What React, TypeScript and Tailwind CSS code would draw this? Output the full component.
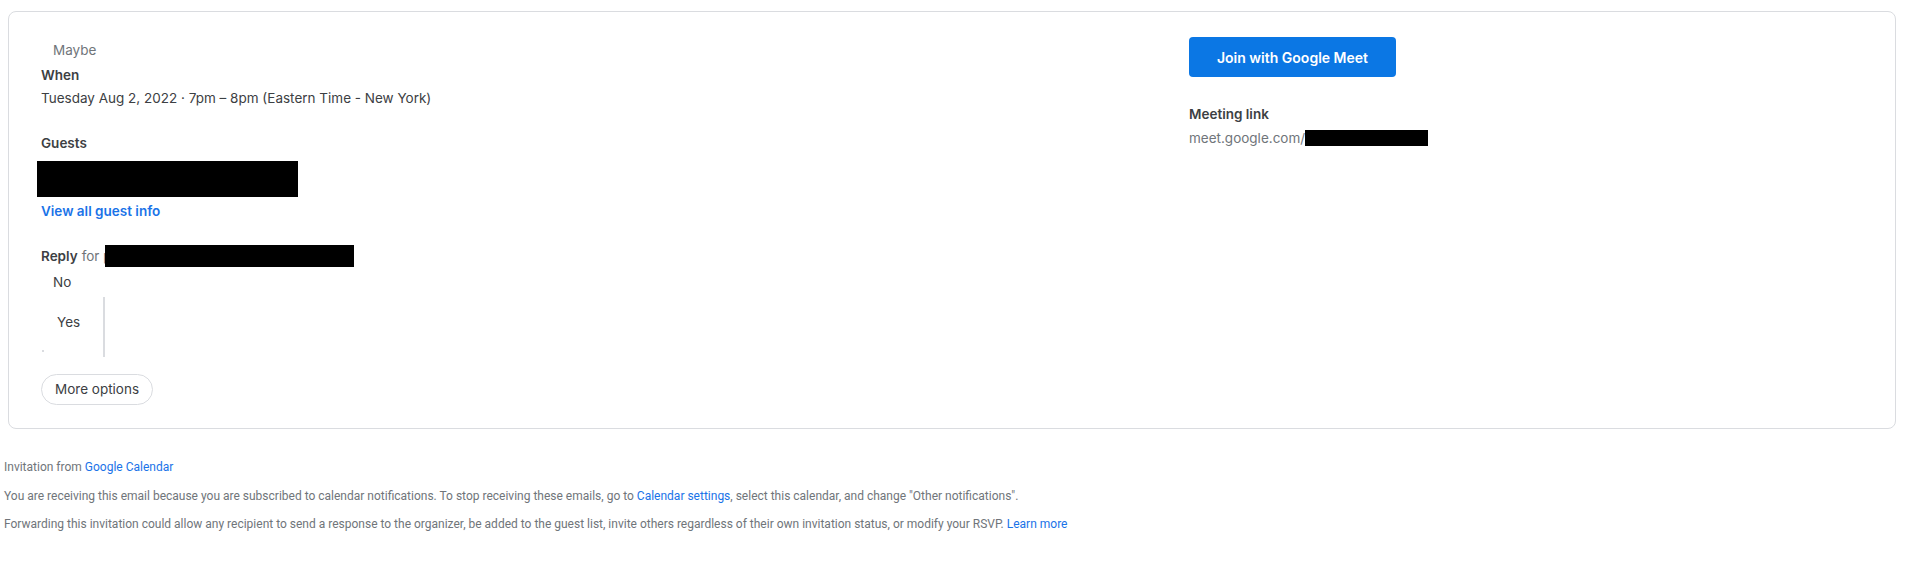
import React from "react";

const Redacted = ({ className }: { className: string }) => (
  <span className={`inline-block bg-black align-middle ${className}`} />
);

const Label = ({ children }: { children: React.ReactNode }) => (
  <div className="text-[13.5px] leading-5 font-semibold text-[#3c4043]">{children}</div>
);

export default function App() {
  return (
    <div className="min-h-[561px] bg-white pl-1 pt-[11px] font-['Inter',sans-serif]">
      <div className="ml-1 mr-[13px] flex rounded-lg border border-[#dadce0] pt-[28px] pb-[23px]">
        {/* left column */}
        <div className="w-[1180px] pl-[32px]">
          <div className="pl-3 text-[13.5px] leading-5 text-[#70757a]">Maybe</div>

          <div className="mt-[5px]">
            <Label>When</Label>
            <div className="mt-[3px] text-[13.5px] leading-5 text-[#3c4043]">
              Tuesday Aug 2, 2022 · 7pm – 8pm (Eastern Time - New York)
            </div>
          </div>

          <div className="mt-[25px]">
            <Label>Guests</Label>
            <div className="mt-2 -ml-1 h-9 w-[261px] bg-black" />
            <a className="mt-[4px] block text-[13.5px] leading-5 font-semibold text-[#1a73e8]">
              View all guest info
            </a>
          </div>

          <div className="mt-[24px] flex items-center text-[13.5px] leading-5">
            <span className="font-semibold text-[#3c4043]">Reply</span>
            <span className="ml-1 text-[#70757a]">for p</span>
            <Redacted className="-ml-[6px] h-[22px] w-[249px]" />
          </div>

          <div className="mt-[5px] pl-3 text-[13.5px] leading-5 text-[#3c4043]">No</div>

          <div className="mt-[5px] flex h-[60px] items-stretch">
            <div className="relative w-[62px]">
              <span className="absolute left-4 top-[15px] text-[13.5px] leading-5 text-[#3c4043]">
                Yes
              </span>
              <span className="absolute left-[1px] top-[53px] h-[2px] w-[2px] bg-[#dadce0]" />
            </div>
            <div className="w-[2px] bg-[#dadce0]" />
          </div>

          <button className="mt-[17px] h-[31px] rounded-full border border-[#dadce0] px-[13px] text-[13.5px] text-[#3c4043]">
            More options
          </button>
        </div>

        {/* right column */}
        <div>
          <button className="-mt-[3px] h-10 w-[207px] rounded bg-[#0b77e4] text-[14px] font-semibold text-white">
            Join with Google Meet
          </button>
          <div className="mt-[27px]">
            <Label>Meeting link</Label>
            <div className="mt-1 flex items-center text-[13.5px] leading-5 text-[#70757a]">
              <span>meet.google.com/</span>
              <Redacted className="h-4 w-[123px]" />
            </div>
          </div>
        </div>
      </div>

      <div className="mt-[30px] font-['Roboto',sans-serif] text-[12px] leading-4 text-[#70757a]">
        <p>
          Invitation from <a className="text-[#1a73e8]">Google Calendar</a>
        </p>
        <p className="mt-[13px]">
          You are receiving this email because you are subscribed to calendar notifications. To stop receiving
          these emails, go to <a className="text-[#1a73e8]">Calendar settings</a>, select this calendar, and
          change "Other notifications".
        </p>
        <p className="mt-[12px]">
          Forwarding this invitation could allow any recipient to send a response to the organizer, be added to
          the guest list, invite others regardless of their own invitation status, or modify your RSVP.{" "}
          <a className="text-[#1a73e8]">Learn more</a>
        </p>
      </div>
    </div>
  );
}
